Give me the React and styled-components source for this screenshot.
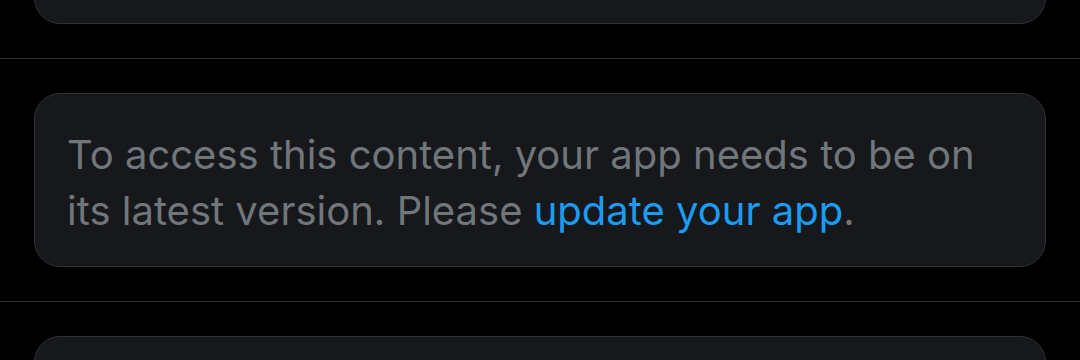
import React from "react";
import styled, { createGlobalStyle } from "styled-components";

const Global = createGlobalStyle`
  html, body {
    margin: 0;
    padding: 0;
    background: #000000;
    overflow: hidden;
  }
  body {
    font-family: Inter, "Noto Sans", "Liberation Sans", sans-serif;
  }
`;

const Feed = styled.div`
  display: flex;
  flex-direction: column;
  margin-top: -184px;
  background: #000000;
`;

const Item = styled.div`
  padding: 34px 34px;
  border-bottom: 1px solid #2f3336;
`;

const Notice = styled.div`
  background: #16181c;
  border: 1px solid #2f3336;
  border-radius: 26px;
  padding: 33px 32px 27px;
  min-height: 112px;
`;

const Text = styled.p`
  margin: 0;
  font-family: Inter, "Noto Sans", "Liberation Sans", sans-serif;
  font-size: 40px;
  line-height: 56px;
  color: #71767b;
  letter-spacing: 0;
`;

const Link = styled.a`
  color: #1d9bf0;
  text-decoration: none;
`;

function UpdateNotice() {
  return (
    <Notice>
      <Text>
        To access this content, your app needs to be on its latest version.
        Please <Link href="#">update your app</Link>.
      </Text>
    </Notice>
  );
}

export default function App() {
  return (
    <>
      <Global />
      <Feed>
        <Item>
          <UpdateNotice />
        </Item>
        <Item>
          <UpdateNotice />
        </Item>
        <Item>
          <UpdateNotice />
        </Item>
      </Feed>
    </>
  );
}
